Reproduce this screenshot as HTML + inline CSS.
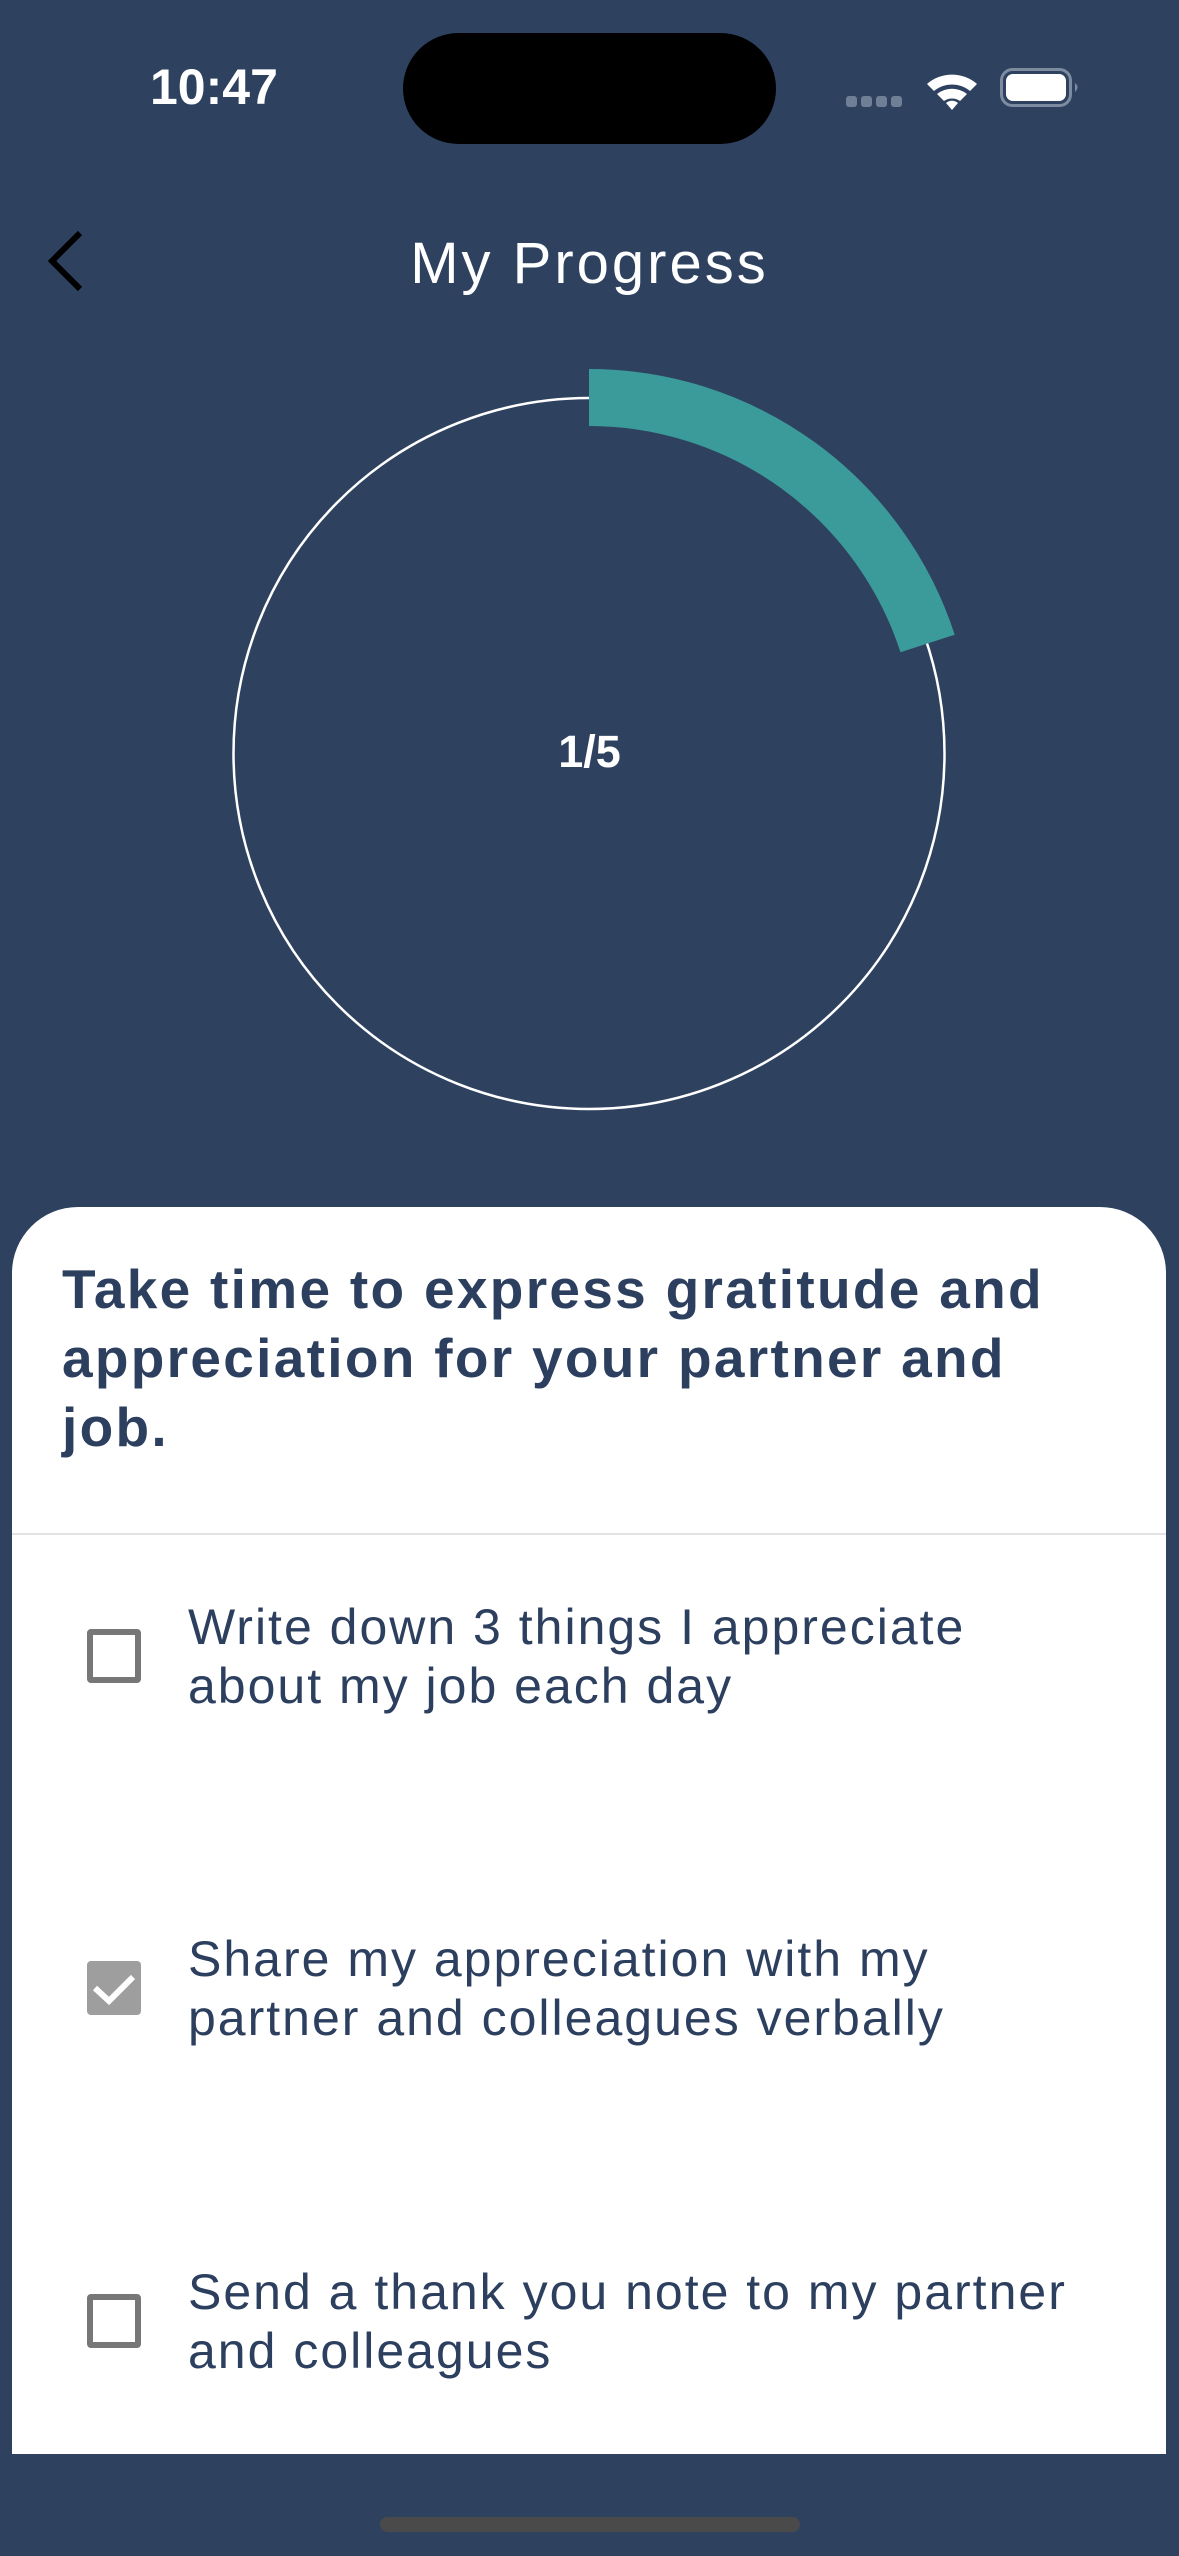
<!DOCTYPE html>
<html><head><meta charset="utf-8"><style>
*{margin:0;padding:0;box-sizing:border-box}
html,body{width:1179px;height:2556px;overflow:hidden;background:#2e4260;font-family:"Liberation Sans",sans-serif}
.a{position:absolute;white-space:nowrap}
.card{position:absolute;left:12px;top:1207px;width:1154px;height:1247px;background:#fff;border-radius:66px 66px 0 0}
.h{color:#2c3f5e;font-weight:bold;font-size:55px;line-height:69px;left:62px;top:1255px;letter-spacing:2.3px}
.t{color:#2c3f5e;font-size:50px;line-height:59px;left:188px;letter-spacing:2px}
.cb{position:absolute;left:87px;width:54px;height:54px;border:6px solid #777;border-radius:4px}
</style></head><body>
<div class="a" style="left:150px;top:57px;font-size:50px;font-weight:bold;color:#fff;line-height:60px">10:47</div>
<div class="a" style="left:403px;top:33px;width:373px;height:111px;background:#000;border-radius:56px"></div>
<svg class="a" style="left:0;top:0" width="1179" height="1200">
<g fill="#6f7f96"><rect x="846" y="96" width="11" height="11" rx="3"/><rect x="861" y="96" width="11" height="11" rx="3"/><rect x="876" y="96" width="11" height="11" rx="3"/><rect x="891" y="96" width="11" height="11" rx="3"/></g>
<g fill="#fff"><path d="M927 84 A38 38 0 0 1 977 84 L970 91 A28 28 0 0 0 934 91 Z"/><path d="M937 94 A24 24 0 0 1 967 94 L960 101 A14 14 0 0 0 944 101 Z"/><path d="M946 103 A9 9 0 0 1 958 103 L952 110 Z"/></g>
<rect x="1001.5" y="69.5" width="69" height="36" rx="11" fill="none" stroke="#7d8ba0" stroke-width="3"/>
<rect x="1006" y="74" width="60" height="27" rx="7" fill="#fff"/>
<path d="M1075 83 Q1080 87 1075 92 Z" fill="#7d8ba0"/>
<path d="M80 233 L52 261 L80 289" fill="none" stroke="#000" stroke-width="6"/>
<circle cx="589" cy="753.5" r="355.5" fill="none" stroke="#fff" stroke-width="2.5"/>
<path d="M589 397.5 A356 356 0 0 1 927.6 643.5" fill="none" stroke="#3b9b9b" stroke-width="57"/>
</svg>
<div class="a" style="left:0;width:1179px;text-align:center;top:234px;font-size:58px;color:#fff;line-height:60px;letter-spacing:3px">My Progress</div>
<div class="a" style="left:0;width:1179px;text-align:center;top:725px;font-size:45px;font-weight:bold;color:#fff;line-height:54px">1/5</div>
<div class="card"></div>
<div class="a h">Take time to express gratitude and<br>appreciation for your partner and<br>job.</div>
<div class="a" style="left:12px;top:1533px;width:1154px;height:2px;background:#e3e3e3"></div>
<div class="cb" style="top:1629px"></div>
<div class="a t" style="top:1598px">Write down 3 things I appreciate<br>about my job each day</div>
<div class="a" style="left:87px;top:1961px;width:54px;height:54px;background:#9e9e9e;border-radius:4px"></div>
<svg class="a" style="left:87px;top:1961px" width="54" height="54"><path d="M8 27 L22 40 L46 16" fill="none" stroke="#fff" stroke-width="6"/></svg>
<div class="a t" style="top:1930px">Share my appreciation with my<br>partner and colleagues verbally</div>
<div class="cb" style="top:2294px"></div>
<div class="a t" style="top:2263px">Send a thank you note to my partner<br>and colleagues</div>
<div class="a" style="left:380px;top:2517px;width:420px;height:15px;background:#4a4a4a;border-radius:8px"></div>
</body></html>
